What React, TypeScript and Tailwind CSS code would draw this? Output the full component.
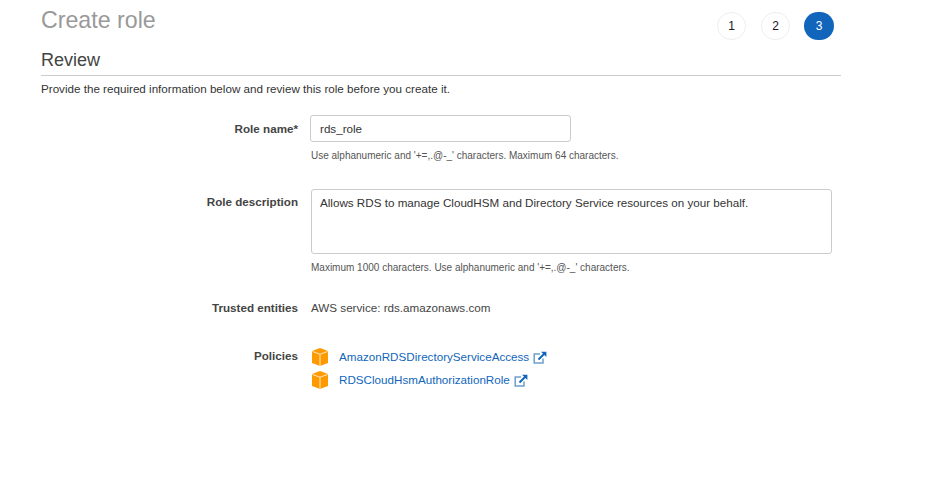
import { ReactNode } from 'react'

const BoxIcon = () => (
  <svg width="18" height="18" viewBox="0 0 18 18" className="shrink-0">
    <path d="M9 0 L17 3 V15 L9 18 L1 15 V3 Z" fill="#f90" />
    <path d="M1.5 3.4 L9 6.2 L16.5 3.4 M9 6.2 V18" fill="none" stroke="#ffe3b8" strokeWidth="1.1" />
  </svg>
)

const ExternalIcon = () => (
  <svg width="14" height="13" viewBox="0 0 14 13" fill="none" className="ml-[4px] mt-[3px] shrink-0">
    <path d="M7 3 H1.2 V12 H10 V7.5" stroke="#6f9fc9" strokeWidth="1.5" />
    <path d="M5.5 8.5 L12 2" stroke="#1166bb" strokeWidth="2" />
    <path d="M8 0.7 H13.4 V6 Z" fill="#1166bb" />
  </svg>
)

const Step = ({ n, active }: { n: number; active?: boolean }) => (
  <div
    className={
      active
        ? 'w-[30px] h-[28px] rounded-full bg-[#1166bb] text-white flex items-center justify-center text-[12px]'
        : 'w-[29px] h-[28px] rounded-full border border-[#eeeeee] text-[#16191f] flex items-center justify-center text-[12px]'
    }
  >
    {n}
  </div>
)

const Row = ({ label, className, labelClass, children }: { label: string; className: string; labelClass?: string; children: ReactNode }) => (
  <div className={`flex ${className}`}>
    <div className={`w-[257px] text-right font-bold text-[11.65px] leading-[16px] text-[#444444] shrink-0 ${labelClass ?? ''}`}>{label}</div>
    <div className="ml-[13px] flex-1 min-w-0">{children}</div>
  </div>
)

export default function App() {
  return (
    <div className="w-[925px] h-[485px] bg-white overflow-hidden font-['Liberation_Sans',Arial,sans-serif] text-[#444444]">
      <div className="w-[800px] ml-[41px]">
        <div className="flex justify-between h-[40px] pt-[12px]">
          <h1 className="text-[23.2px] leading-[28px] text-[#999999] -mt-[6px]">Create role</h1>
          <div className="flex gap-[14px] mr-[7px]">
            <div className="mr-[1px]">
              <Step n={1} />
            </div>
            <Step n={2} />
            <Step n={3} active />
          </div>
        </div>
        <h2 className="text-[18px] leading-[24px] text-[#444444] mt-[8px] pb-[3px] border-b border-[#cccccc]">Review</h2>
        <p className="text-[11.65px] leading-[16px] text-[#333333] mt-[5px]">
          Provide the required information below and review this role before you create it.
        </p>

        <Row label="Role name*" labelClass="pt-[6px]" className="mt-[18px]">
          <div className="w-[261px] h-[27px] -ml-[1px] rounded-[3px] border border-[#cccccc] px-[9px] text-[11.65px] leading-[25px] text-[#333333]">
            rds_role
          </div>
          <p className="text-[10px] leading-[12px] text-[#555555] mt-[8px]">
            Use alphanumeric and '+=,.@-_' characters. Maximum 64 characters.
          </p>
        </Row>

        <Row label="Role description" labelClass="pt-[5px]" className="mt-[27px]">
          <div className="w-[521px] h-[65px] rounded-[3px] border border-[#cccccc] px-[8px] py-[5px] text-[11.65px] leading-[16px] text-[#333333]">
            Allows RDS to manage CloudHSM and Directory Service resources on your behalf.
          </div>
          <p className="text-[10px] leading-[12px] text-[#555555] mt-[8px]">
            Maximum 1000 characters. Use alphanumeric and '+=,.@-_' characters.
          </p>
        </Row>

        <Row label="Trusted entities" className="mt-[26px]">
          <p className="text-[11.65px] leading-[16px] text-[#444444]">AWS service: rds.amazonaws.com</p>
        </Row>

        <Row label="Policies" className="mt-[32px]">
          <div className="flex flex-col gap-[3px]">
            <a className="flex items-start h-[20px] text-[11.65px] leading-[18px] text-[#1166bb]">
              <BoxIcon />
              <span className="ml-[10px]">AmazonRDSDirectoryServiceAccess</span>
              <ExternalIcon />
            </a>
            <a className="flex items-start h-[20px] text-[11.65px] leading-[18px] text-[#1166bb]">
              <BoxIcon />
              <span className="ml-[10px]">RDSCloudHsmAuthorizationRole</span>
              <ExternalIcon />
            </a>
          </div>
        </Row>
      </div>
    </div>
  )
}
